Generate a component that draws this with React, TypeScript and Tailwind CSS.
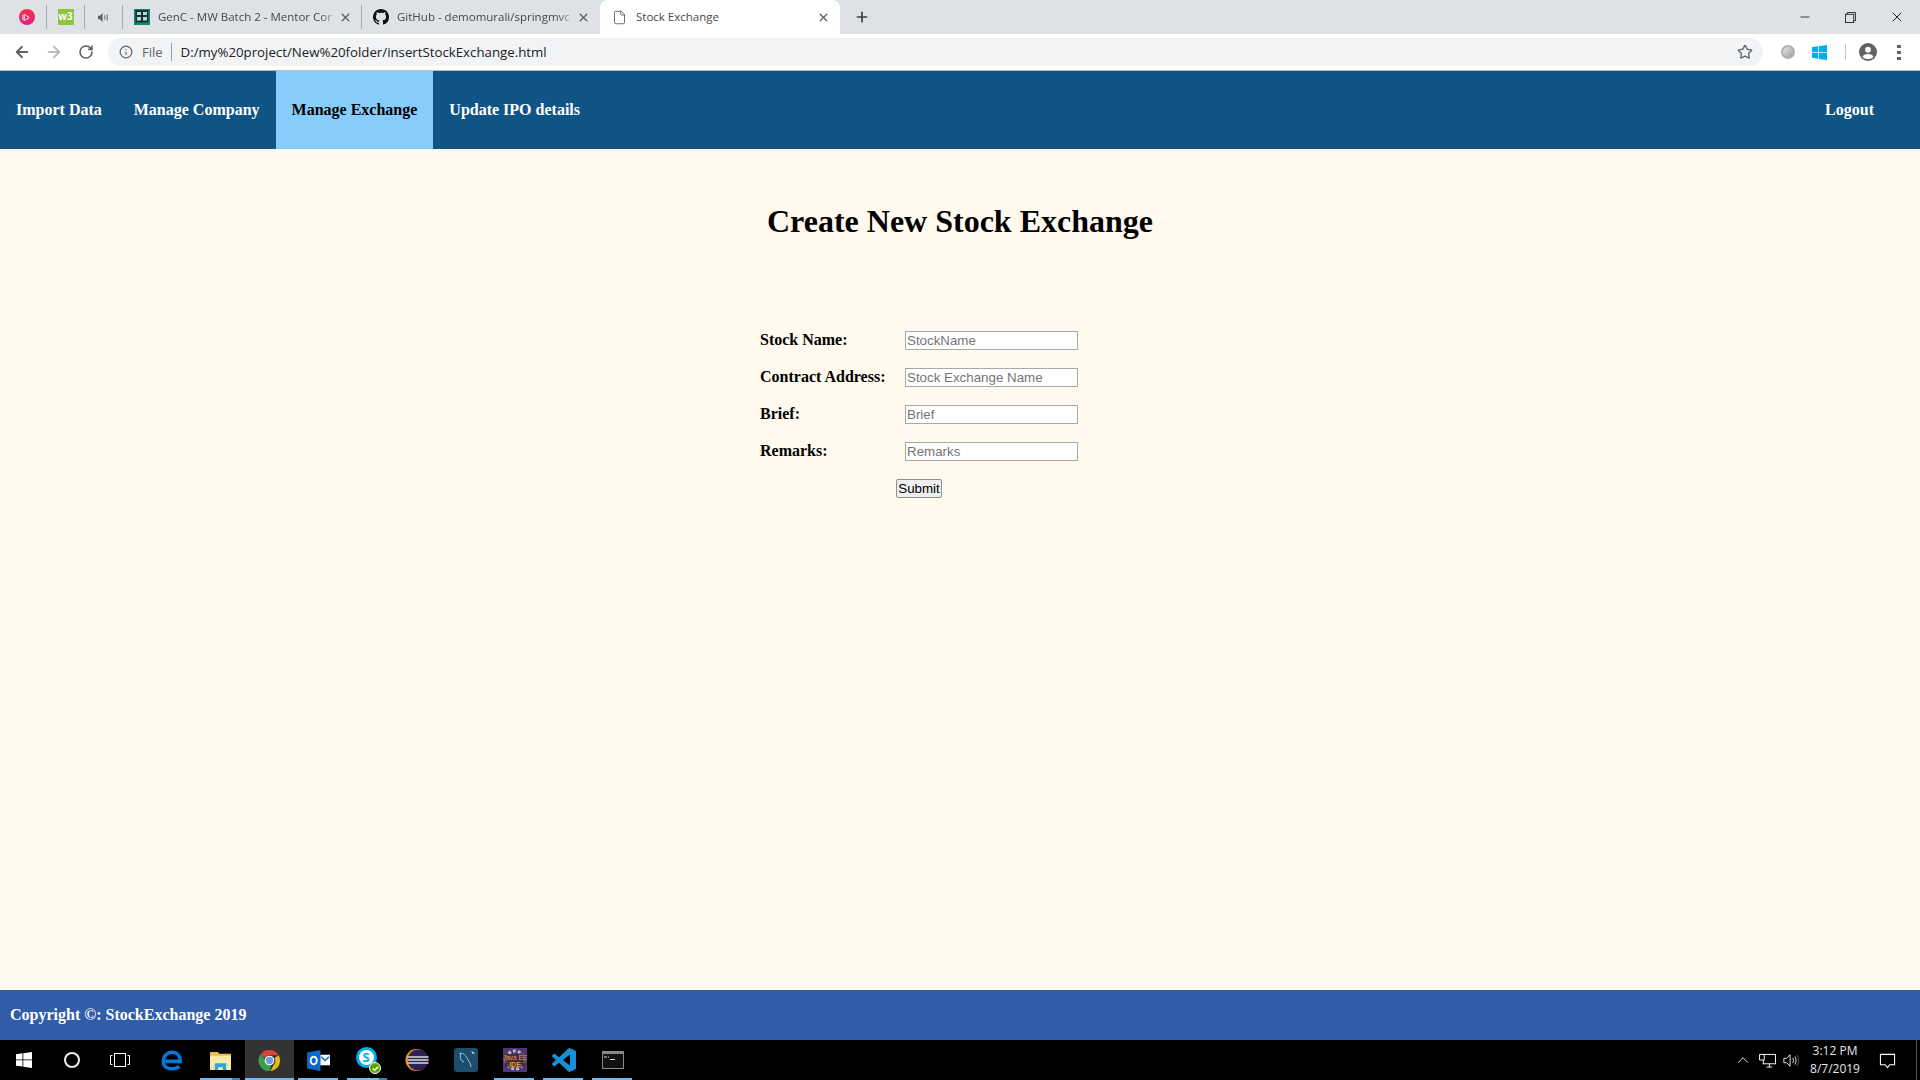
import { ArrowLeft, ArrowRight, RotateCw, Info, Star, X, Plus, Minus, File, ChevronUp } from "lucide-react";

const Sep = () => <div className="w-px h-[24px] bg-[#a9abae] shrink-0" />;

const WinLogo = ({ className, fill }: { className: string; fill: string }) => (
  <svg viewBox="0 0 16 16" className={className} fill={fill}>
    <path d="M0 2.2 6.5 1.3v6.2H0zM7.3 1.2 16 0v7.5H7.3zM0 8.3h6.5v6.3L0 13.7zM7.3 8.3H16V16l-8.7-1.2z" />
  </svg>
);

const BrowserChrome = () => (
  <div className="font-['Open_Sans',sans-serif]">
    <div className="h-[34px] bg-[#dee1e6] flex items-center">
      <div className="w-[46px] flex justify-center pl-[7px]">
        <div className="w-[16px] h-[16px] rounded-full bg-gradient-to-b from-[#f0303f] to-[#e8178a] flex items-center justify-center">
          <svg viewBox="0 0 10 10" className="w-[9px] h-[9px]"><path d="M2.500 1.500 L8 5 L2.500 8.500 Z M1 2v6" fill="none" stroke="#fff" strokeWidth="1" /></svg>
        </div>
      </div>
      <Sep />
      <div className="w-[37px] flex justify-center">
        <div className="w-[16px] h-[16px] bg-[#8cc63f] text-white text-[10px] leading-[15px] font-bold text-center">w3</div>
      </div>
      <Sep />
      <div className="w-[37px] flex justify-center">
        <svg viewBox="0 0 12 12" className="w-[11px] h-[11px]" fill="#5f6368">
          <path d="M0 4h2l3-3v10L2 8H0z" />
          <path d="M7 3.500h1v5H7zM9.500 2.500h1v7h-1z" />
        </svg>
      </div>
      <Sep />
      {/* background tabs */}
      <div className="w-[238px] h-[34px] flex items-center shrink-0">
        <svg viewBox="0 0 16 16" className="w-[16px] h-[16px] ml-[11px] shrink-0">
          <rect width="16" height="16" fill="#0f8a68" />
          <rect x="1.500" y="1" width="13" height="12.500" fill="#17323a" />
          <path d="M3 3h4v3H3zM9 3h4v3H9zM3 8h4v3.500H3zM9 8h4v3.500H9z" fill="#b8dcc8" />
        </svg>
        <span className="ml-[8px] w-[180px] overflow-hidden whitespace-nowrap text-[11.5px] text-[#45484c] [mask-image:linear-gradient(to_right,black_90%,transparent)]">GenC - MW Batch 2 - Mentor Cor</span>
        <X className="w-[13px] h-[13px] text-[#5f6368] ml-[1px] shrink-0" strokeWidth={2.6} />
      </div>
      <Sep />
      <div className="w-[238px] h-[34px] flex items-center shrink-0">
        <svg viewBox="0 0 16 16" className="w-[16px] h-[16px] ml-[11px] shrink-0" fill="#111">
          <path d="M8 0C3.580 0 0 3.580 0 8c0 3.540 2.290 6.530 5.470 7.590.4.070.55-.17.55-.38 0-.19-.01-.82-.01-1.490-2.010.37-2.530-.49-2.690-.94-.09-.23-.48-.94-.82-1.130-.28-.15-.68-.52-.01-.53.63-.01 1.080.58 1.230.82.72 1.210 1.870.87 2.330.66.07-.52.28-.87.51-1.070-1.780-.2-3.640-.89-3.640-3.950 0-.87.31-1.590.82-2.150-.08-.2-.36-1.020.08-2.120 0 0 .67-.21 2.200.82.64-.18 1.320-.27 2-.27s1.360.09 2 .27c1.530-1.040 2.200-.82 2.200-.82.44 1.100.16 1.920.08 2.120.51.56.82 1.270.82 2.150 0 3.070-1.870 3.750-3.650 3.950.29.25.54.73.54 1.480 0 1.070-.01 1.930-.01 2.200 0 .21.15.46.55.38A8.010 8.010 0 0016 8c0-4.420-3.580-8-8-8z" />
        </svg>
        <span className="ml-[8px] w-[179px] overflow-hidden whitespace-nowrap text-[11.5px] text-[#45484c] [mask-image:linear-gradient(to_right,black_90%,transparent)]">GitHub - demomurali/springmvc</span>
        <X className="w-[13px] h-[13px] text-[#5f6368] ml-[1px] shrink-0" strokeWidth={2.6} />
      </div>
      <div className="w-[240px] h-[34px] bg-white rounded-t-[8px] flex items-center shrink-0">
        <File className="w-[15px] h-[15px] text-[#5f6368] ml-[12px]" strokeWidth={1.5} />
        <span className="ml-[9px] w-[181px] text-[11.5px] text-[#45484c]">Stock Exchange</span>
        <X className="w-[13px] h-[13px] text-[#5f6368]" strokeWidth={2.6} />
      </div>
      <Plus className="w-[16px] h-[16px] text-[#3c4043] ml-[14px]" strokeWidth={2.5} />
      <div className="flex-1" />
      <div className="flex items-center text-[#222] pr-[15px]">
        <Minus className="w-[14px] h-[14px]" strokeWidth={1.5} />
        <svg viewBox="0 0 12 12" className="w-[11px] h-[11px] ml-[33px]" fill="none" stroke="#222" strokeWidth="1">
          <rect x="0.500" y="2.500" width="9" height="9" />
          <path d="M2.500 2.500V.5h9v9h-2" />
        </svg>
        <X className="w-[16px] h-[16px] ml-[33px]" strokeWidth={1.5} />
      </div>
    </div>
    <div className="h-[36px] bg-white flex items-center border-b border-b-[#b9bbbe] box-content -mb-px">
      <ArrowLeft className="w-[18px] h-[18px] text-[#5f6368] ml-[13px]" strokeWidth={2.4} />
      <ArrowRight className="w-[18px] h-[18px] text-[#b9bbbe] ml-[14px]" strokeWidth={2.4} />
      <RotateCw className="w-[16px] h-[16px] text-[#5f6368] ml-[15px]" strokeWidth={2.4} />
      <div className="ml-[14px] flex-1 h-[28px] rounded-full bg-[#f1f3f4] flex items-center">
        <Info className="w-[14px] h-[14px] text-[#5f6368] ml-[11px]" strokeWidth={2} />
        <span className="ml-[9px] text-[13px] text-[#5f6368] mt-px">File</span>
        <div className="w-px h-[18px] bg-[#9aa0a6] ml-[8px]" />
        <span className="ml-[9px] text-[13.25px] text-[#202124] mt-px">D:/my%20project/New%20folder/insertStockExchange.html</span>
        <div className="flex-1" />
        <Star className="w-[16px] h-[16px] text-[#5f6368] mr-[10px]" strokeWidth={2} />
      </div>
      <div className="ml-[18px] w-[14px] h-[14px] rounded-full bg-gradient-to-br from-[#e8e8e8] to-[#a0a0a0] border-2 border-[#b0b0b0]" />
      <WinLogo className="w-[15px] h-[15px] ml-[17px]" fill="#00adef" />
      <div className="w-px h-[16px] bg-[#c4c6c9] ml-[18px]" />
      <svg viewBox="0 0 20 20" className="w-[18px] h-[18px] ml-[13px]">
        <circle cx="10" cy="10" r="10" fill="#5f6368" />
        <circle cx="10" cy="7.500" r="3.200" fill="#fff" />
        <path d="M3.800 15.200C5 13 7.500 12.200 10 12.200s5 .8 6.200 3c-1.500 1.700-3.700 2.800-6.200 2.800s-4.700-1.100-6.200-2.800z" fill="#fff" />
      </svg>
      <div className="ml-[20px] mr-[19px] flex flex-col gap-[3px]">
        <div className="w-[4px] h-[3px] bg-[#5f6368]" />
        <div className="w-[4px] h-[3px] bg-[#5f6368]" />
        <div className="w-[4px] h-[3px] bg-[#5f6368]" />
      </div>
    </div>
  </div>
);

const NavBar = () => (
  <nav className="h-[78px] mt-px bg-[#105486] flex font-['Liberation_Serif',serif] font-bold text-[16px] text-white">
    <a className="px-[16px] flex items-center">Import Data</a>
    <a className="px-[16px] flex items-center">Manage Company</a>
    <a className="px-[16px] flex items-center bg-[#87cdfc] text-black">Manage Exchange</a>
    <a className="px-[16px] flex items-center">Update IPO details</a>
    <a className="ml-auto pr-[46px] flex items-center">Logout</a>
  </nav>
);

const fields = [
  { label: "Stock Name:", hint: "StockName" },
  { label: "Contract Address:", hint: "Stock Exchange Name" },
  { label: "Brief:", hint: "Brief" },
  { label: "Remarks:", hint: "Remarks" },
];

const Form = () => (
  <div className="flex justify-center mt-[82px]">
    <div className="w-[318px] mr-[82px]">
      {fields.map((f) => (
        <div key={f.label} className="flex items-center h-[37px]">
          <label className="w-[145px] -mt-px font-bold text-[16px] text-black">{f.label}</label>
          <input
            readOnly
            placeholder={f.hint}
            className="w-[173px] h-[19px] bg-white border border-[#a9a9a9] px-[1px] text-[13.33px] font-['Liberation_Sans',sans-serif] placeholder:text-[#757575] outline-none"
          />
        </div>
      ))}
      <div className="flex justify-center h-[37px] items-center">
        <button className="h-[19px] w-[46px] bg-[#efefef] border border-[#8f8f8f] rounded-[2px] text-[13.33px] leading-none text-black font-['Liberation_Sans',sans-serif]">Submit</button>
      </div>
    </div>
  </div>
);

const taskIcon = "w-[49px] h-[40px] flex items-center justify-center relative shrink-0";

// underline under a running app, stacked marks a second window
const Running = ({ stacked }: { stacked?: boolean }) => (
  <div className="absolute bottom-0 left-[4px] w-[40px] h-[2px] bg-[#76b9ed]">
    {stacked && <div className="absolute right-0 top-0 h-[2px] w-[8px] bg-[#4a7fa8]" />}
  </div>
);

const TaskBar = () => (
  <div className="h-[40px] bg-black flex items-center text-white font-['Open_Sans',sans-serif]">
    <div className="w-[48px] h-[40px] flex items-center justify-center shrink-0">
      <WinLogo className="w-[16px] h-[16px]" fill="#fff" />
    </div>
    <div className="w-[48px] h-[40px] flex items-center justify-center shrink-0">
      <div className="w-[16px] h-[16px] rounded-full border-[2px] border-[#eee]" />
    </div>
    <div className="w-[48px] h-[40px] flex items-center justify-center shrink-0">
      <svg viewBox="0 0 20 14" className="w-[20px] h-[14px]" fill="none" stroke="#fff" strokeWidth="1">
        <rect x="4.500" y="0.500" width="11" height="13" />
        <path d="M2.500 2.500H.5v9h2M17.500 2.500h2v9h-2" />
      </svg>
    </div>
    <div className={`${taskIcon} ml-[3px]`}>
      <svg viewBox="0 0 24 24" className="w-[22px] h-[22px]" fill="none" stroke="#0078d7" strokeWidth="4">
        <path d="M5 13.500h16c0-6-3.500-10-9-10S2.500 8.500 2.500 13.500 6.500 21.500 12 21.500c3 0 6-.8 8-2.500" />
      </svg>
    </div>
    <div className={taskIcon}>
      <svg viewBox="0 0 22 20" className="w-[21px] h-[19px]">
        <path d="M0 1h8l2 2h12v17H0z" fill="#e8bf57" />
        <rect x="0" y="5" width="22" height="15" fill="#fce9a8" />
        <path d="M5 20v-7h12v7h-3.500v-3h-5v3z" fill="#2aa7e0" />
      </svg>
      <Running stacked />
    </div>
    <div className={`${taskIcon} bg-[#333]`}>
      <svg viewBox="0 0 24 24" className="w-[23px] h-[23px]">
        <path d="M12 1a11 11 0 0 1 9.500 5.500H12a5.500 5.500 0 0 0-5 3.200L3.400 4.600A11 11 0 0 1 12 1z" fill="#db4437" />
        <path d="M21.500 6.500A11 11 0 0 1 12.800 23l4-7a5.500 5.500 0 0 0 .3-6.500z" fill="#e8b71a" />
        <path d="M12 23A11 11 0 0 1 3.400 4.600L7.700 12a5.500 5.500 0 0 0 6.200 5z" fill="#3d9e4a" />
        <circle cx="12" cy="12" r="4.400" fill="#6a9cf0" stroke="#fff" strokeWidth="1.200" />
      </svg>
      <div className="absolute bottom-0 left-0 right-0 h-[2px] bg-[#76b9ed]" />
    </div>
    <div className={taskIcon}>
      <svg viewBox="0 0 24 22" className="w-[23px] h-[21px]">
        <path d="M0 2.500 14 0v22L0 19.500z" fill="#0a6ac7" />
        <ellipse cx="7" cy="11" rx="3.200" ry="4" fill="none" stroke="#fff" strokeWidth="2" />
        <rect x="14" y="5" width="10" height="11" fill="#fff" />
        <path d="M15 7l4 4 4-4" fill="none" stroke="#0a6ac7" strokeWidth="1.500" />
      </svg>
      <Running />
    </div>
    <div className={taskIcon}>
      <div className="w-[21px] h-[21px] rounded-full bg-[#00aff0] p-[3px] -mt-[5px] -ml-[3px]">
        <div className="w-full h-full rounded-full bg-white text-[#00aff0] text-[13px] leading-[15px] font-bold text-center">S</div>
      </div>
      <div className="absolute right-[11px] bottom-[6px] w-[12px] h-[12px] rounded-full bg-[#5aa700] border border-white flex items-center justify-center">
        <svg viewBox="0 0 8 8" className="w-[7px] h-[7px]"><path d="M1 4l2 2 4-4" fill="none" stroke="#fff" strokeWidth="1.500" /></svg>
      </div>
      <Running stacked />
    </div>
    <div className={taskIcon}>
      <svg viewBox="0 0 24 24" className="w-[24px] h-[24px]">
        <circle cx="11.500" cy="12" r="11" fill="#f7941e" />
        <circle cx="13" cy="12" r="10.500" fill="#2c2255" />
        <path d="M2.500 9h21M2.500 12h21M2.500 15h21" stroke="#ddd" strokeWidth="1.300" />
      </svg>
    </div>
    <div className={taskIcon}>
      <svg viewBox="0 0 24 24" className="w-[24px] h-[24px]">
        <rect width="24" height="24" rx="3" fill="#1d4e6e" />
        <path d="M5 6c3-2 6 0 8 4l3 5 1 4M7 5c-1 3-1 6 1 8l2 1" fill="none" stroke="#a8c8dc" strokeWidth="0.900" />
        <path d="M17 3l4 2-2 1z" fill="#dfe9ef" />
      </svg>
    </div>
    <div className={taskIcon}>
      <svg viewBox="0 0 24 24" className="w-[24px] h-[24px]">
        <rect width="24" height="24" fill="#4f3578" />
        <circle cx="12" cy="12" r="9" fill="none" stroke="#b7b7b7" strokeWidth="3" strokeDasharray="3 2" />
        <rect x="2" y="6" width="20" height="13" fill="#3a2a3c" opacity="0.800" />
        <text x="12" y="11.500" textAnchor="middle" fontSize="6.500" fill="#f7941e" fontFamily="Liberation Sans, sans-serif">Java EE</text>
        <text x="12" y="18.500" textAnchor="middle" fontSize="7" fontWeight="bold" fill="#f7941e" fontFamily="Liberation Sans, sans-serif">IDE</text>
      </svg>
      <Running />
    </div>
    <div className={taskIcon}>
      <svg viewBox="0 0 24 24" className="w-[24px] h-[24px]" fill="#1a8fd8">
        <path d="M23.150 2.587L18.210.21a1.494 1.494 0 0 0-1.705.29l-9.460 8.630-4.120-3.128a.999.999 0 0 0-1.276.057L.327 7.261A1 1 0 0 0 .326 8.740L3.899 12 .326 15.260a1 1 0 0 0 .001 1.479L1.650 17.940a.999.999 0 0 0 1.276.057l4.120-3.128 9.460 8.630a1.492 1.492 0 0 0 1.704.29l4.942-2.377A1.500 1.500 0 0 0 24 20.060V3.939a1.500 1.500 0 0 0-.85-1.352zm-5.146 14.861L10.826 12l7.178-5.448v10.896z" />
      </svg>
      <Running />
    </div>
    <div className={taskIcon}>
      <div className="w-[22px] h-[18px] bg-[#111] border border-[#888]">
        <div className="h-[2px] bg-[#888]" />
        <svg viewBox="0 0 20 13" className="w-[20px] h-[13px]"><path d="M1 3h3M5 3h1M7 5.500h5" stroke="#ddd" strokeWidth="1.100" /></svg>
      </div>
      <Running />
    </div>
    <div className="flex-1" />
    <div className="w-[24px] flex justify-center shrink-0">
      <ChevronUp className="w-[18px] h-[18px] text-white" strokeWidth={1.2} />
    </div>
    <div className="w-[24px] flex justify-center shrink-0">
      <svg viewBox="0 0 18 16" className="w-[17px] h-[15px]" fill="none" stroke="#fff" strokeWidth="1">
        <rect x="4.500" y="1.500" width="13" height="10" />
        <path d="M8 15h6M11 11.500V15M.5 1.500h5v6h-5z" fill="#000" />
      </svg>
    </div>
    <div className="w-[24px] flex justify-center shrink-0">
      <svg viewBox="0 0 18 16" className="w-[16px] h-[15px]" fill="none" stroke="#fff" strokeWidth="1">
        <path d="M1 5.500h3l4-4v13l-4-4H1z" />
        <path d="M11 5c1 2 1 4 0 6M13.500 3.500c1.500 3 1.500 6 0 9" />
        <path d="M16 2c2 4 2 8 0 12" stroke="#666" />
      </svg>
    </div>
    <div className="w-[64px] text-center text-[12px] leading-[18px] text-[#e6e6e6] shrink-0">
      <div>3:12 PM</div>
      <div>8/7/2019</div>
    </div>
    <div className="w-[40px] flex justify-center shrink-0">
      <svg viewBox="0 0 18 18" className="w-[17px] h-[17px]" fill="none" stroke="#fff" strokeWidth="1.100">
        <path d="M1.500 2.500h15v11h-5l-2.500 3-2.500-3h-5z" />
      </svg>
    </div>
    <div className="w-[9px]" />
    <div className="w-px h-[40px] bg-[#555]" />
    <div className="w-[3px]" />
  </div>
);

export default function App() {
  return (
    <div className="w-[1920px] h-[1080px] flex flex-col overflow-hidden bg-[#fff9ee]">
      <BrowserChrome />
      <NavBar />
      <main className="flex-1 font-['Liberation_Serif',serif]">
        <h1 className="text-[32px] leading-[37px] font-bold text-black text-center mt-[54px]">Create New Stock Exchange</h1>
        <Form />
      </main>
      <footer className="h-[50px] bg-[#305ca8] flex items-center pl-[10px] font-['Liberation_Serif',serif] font-bold text-[16px] text-white">
        Copyright ©: StockExchange 2019
      </footer>
      <TaskBar />
    </div>
  );
}
